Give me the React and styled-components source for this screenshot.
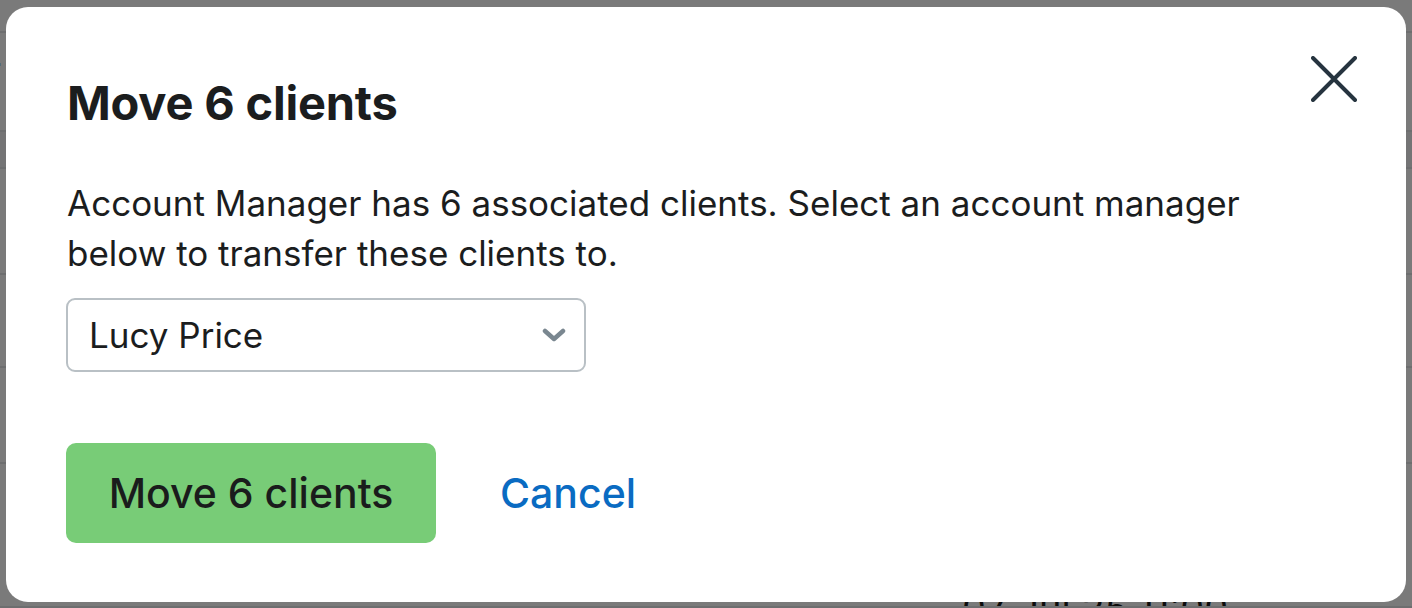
import React from 'react';
import styled, { createGlobalStyle } from 'styled-components';

const GlobalStyle = createGlobalStyle`
  html, body {
    margin: 0;
    padding: 0;
    width: 1412px;
    height: 608px;
    overflow: hidden;
    font-family: "Inter", "Noto Sans", sans-serif;
  }
`;

const rows = [
  { height: 33 },
  { height: 99 },
  { height: 37, shaded: true },
  { height: 106 },
  { height: 93 },
  { height: 96 },
  { height: 144, text: '07 Jul 25 11:00' },
];

export default function App() {
  return (
    <>
      <GlobalStyle />
      <Page>
        {rows.map((row, i) => (
          <PageRow key={i} $height={row.height} $shaded={row.shaded}>
            {i === 1 && <RowLabel>r</RowLabel>}
            {row.text && <BottomText>{row.text}</BottomText>}
          </PageRow>
        ))}
      </Page>
      <Overlay>
        <Modal role="dialog" aria-labelledby="move-title">
          <CloseButton aria-label="Close">
            <svg width="46" height="46" viewBox="0 0 46 46" fill="none">
              <path d="M2 2L44 44M44 2L2 44" stroke="#26343f" strokeWidth="4" strokeLinecap="round" />
            </svg>
          </CloseButton>
          <Title id="move-title">Move 6 clients</Title>
          <Description>
            Account Manager has 6 associated clients. Select an account manager
            <br />
            below to transfer these clients to.
          </Description>
          <SelectBox>
            <span>Lucy Price</span>
            <svg width="24" height="14" viewBox="0 0 24 14" fill="none">
              <path d="M3 3L12 11L21 3" stroke="#7a8790" strokeWidth="4.5" strokeLinecap="round" strokeLinejoin="round" />
            </svg>
          </SelectBox>
          <Actions>
            <PrimaryButton>Move 6 clients</PrimaryButton>
            <LinkButton>Cancel</LinkButton>
          </Actions>
        </Modal>
      </Overlay>
    </>
  );
}

const Page = styled.div`
  width: 1412px;
  height: 608px;
  overflow: hidden;
  background: #ffffff;
  display: flex;
  flex-direction: column;
`;

const PageRow = styled.div`
  height: ${p => p.$height}px;
  box-sizing: border-box;
  flex-shrink: 0;
  border-bottom: 2px solid #e4e6e8;
  background: ${p => (p.$shaded ? '#f2f3f4' : '#ffffff')};
  position: relative;
  display: flex;
  align-items: flex-end;
  overflow: hidden;
`;

const RowLabel = styled.span`
  position: absolute;
  left: -12px;
  top: 16px;
  font-size: 34px;
  color: #1f2b33;
`;

const BottomText = styled.span`
  margin-left: 962px;
  margin-bottom: -22px;
  font-size: 38px;
  line-height: 40px;
  color: #1a1a1a;
`;

const Overlay = styled.div`
  position: fixed;
  inset: 0;
  background: rgba(0, 0, 0, 0.52);
  display: flex;
  padding: 7px 6px 6px 6px;
  box-sizing: border-box;
`;

const Modal = styled.div`
  position: relative;
  flex: 1;
  background: #ffffff;
  border-radius: 22px;
  padding: 68px 60px 0 60px;
  box-sizing: border-box;
`;

const CloseButton = styled.button`
  position: absolute;
  top: 49px;
  right: 49px;
  padding: 0;
  border: 0;
  background: none;
  cursor: pointer;
  display: flex;
`;

const Title = styled.h2`
  margin: 0 0 0 1px;
  font-size: 47px;
  font-weight: 700;
  line-height: 56px;
  letter-spacing: -0.2px;
  color: #1b1d1e;
`;

const Description = styled.p`
  margin: 47px 0 0 1px;
  font-size: 35px;
  line-height: 50px;
  color: #1b1d1e;
`;

const SelectBox = styled.div`
  margin-top: 20px;
  width: 520px;
  height: 74px;
  box-sizing: border-box;
  border: 2px solid #b9c0c5;
  border-radius: 9px;
  display: flex;
  align-items: center;
  justify-content: space-between;
  padding: 0 18px 0 21px;
  font-size: 35px;
  color: #1b1d1e;
`;

const Actions = styled.div`
  margin-top: 71px;
  display: flex;
  align-items: center;
  gap: 64px;
`;

const PrimaryButton = styled.button`
  width: 370px;
  height: 100px;
  border: 0;
  border-radius: 10px;
  background: #78cc77;
  color: #1a1c1c;
  font-family: inherit;
  font-size: 41px;
  font-weight: 500;
  cursor: pointer;
`;

const LinkButton = styled.button`
  border: 0;
  background: none;
  padding: 0;
  color: #0a6bc2;
  font-family: inherit;
  font-size: 41px;
  font-weight: 500;
  cursor: pointer;
`;
